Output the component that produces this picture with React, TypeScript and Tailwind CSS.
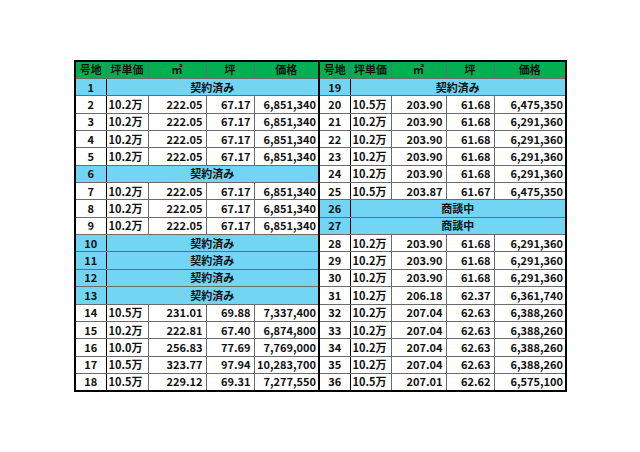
type Row = { no: number; status?: string; price?: string; area?: string; tsubo?: string; total?: string };

const s = (no: number, status: string): Row => ({ no, status });
const d = (no: number, price: string, area: string, tsubo: string, total: string): Row => ({ no, price, area, tsubo, total });

const left: Row[] = [
  s(1, "契約済み"),
  d(2, "10.2万", "222.05", "67.17", "6,851,340"),
  d(3, "10.2万", "222.05", "67.17", "6,851,340"),
  d(4, "10.2万", "222.05", "67.17", "6,851,340"),
  d(5, "10.2万", "222.05", "67.17", "6,851,340"),
  s(6, "契約済み"),
  d(7, "10.2万", "222.05", "67.17", "6,851,340"),
  d(8, "10.2万", "222.05", "67.17", "6,851,340"),
  d(9, "10.2万", "222.05", "67.17", "6,851,340"),
  s(10, "契約済み"),
  s(11, "契約済み"),
  s(12, "契約済み"),
  s(13, "契約済み"),
  d(14, "10.5万", "231.01", "69.88", "7,337,400"),
  d(15, "10.2万", "222.81", "67.40", "6,874,800"),
  d(16, "10.0万", "256.83", "77.69", "7,769,000"),
  d(17, "10.5万", "323.77", "97.94", "10,283,700"),
  d(18, "10.5万", "229.12", "69.31", "7,277,550"),
];

const right: Row[] = [
  s(19, "契約済み"),
  d(20, "10.5万", "203.90", "61.68", "6,475,350"),
  d(21, "10.2万", "203.90", "61.68", "6,291,360"),
  d(22, "10.2万", "203.90", "61.68", "6,291,360"),
  d(23, "10.2万", "203.90", "61.68", "6,291,360"),
  d(24, "10.2万", "203.90", "61.68", "6,291,360"),
  d(25, "10.5万", "203.87", "61.67", "6,475,350"),
  s(26, "商談中"),
  s(27, "商談中"),
  d(28, "10.2万", "203.90", "61.68", "6,291,360"),
  d(29, "10.2万", "203.90", "61.68", "6,291,360"),
  d(30, "10.2万", "203.90", "61.68", "6,291,360"),
  d(31, "10.2万", "206.18", "62.37", "6,361,740"),
  d(32, "10.2万", "207.04", "62.63", "6,388,260"),
  d(33, "10.2万", "207.04", "62.63", "6,388,260"),
  d(34, "10.2万", "207.04", "62.63", "6,388,260"),
  d(35, "10.2万", "207.04", "62.63", "6,388,260"),
  d(36, "10.5万", "207.01", "62.62", "6,575,100"),
];

const cell = "h-[17.37px] border border-[#6b6b6b] p-0 leading-none";

function Half({ row, last }: { row: Row; last?: boolean }) {
  const edge = last ? "" : "border-r-2 border-r-black";
  if (row.status) {
    return (
      <>
        <td className={`${cell} bg-[#72d5f4] text-center border-r-black`}>{row.no}</td>
        <td colSpan={4} className={`${cell} bg-[#72d5f4] text-center ${edge}`}>
          {row.status}
        </td>
      </>
    );
  }
  return (
    <>
      <td className={`${cell} text-center border-r-black`}>{row.no}</td>
      <td className={`${cell} text-left pl-[2px]`}>{row.price}</td>
      <td className={`${cell} text-right pr-[3px]`}>{row.area}</td>
      <td className={`${cell} text-right pr-[3px]`}>{row.tsubo}</td>
      <td className={`${cell} text-right pr-[2px] ${edge}`}>{row.total}</td>
    </>
  );
}

const heads = ["号地", "坪単価", "㎡", "坪", "価格"];

export default function App() {
  return (
    <div className="w-[640px] h-[452px] bg-white pt-[60px] pl-[74px]">
      <table
        className="table-fixed border-collapse border-2 border-black text-[11px] font-bold text-[#111]"
        style={{ fontFamily: '"Noto Sans CJK JP", "Noto Sans", sans-serif', width: 491 }}
      >
        <colgroup>
          <col className="w-[31px]" />
          <col className="w-[42px]" />
          <col className="w-[58px]" />
          <col className="w-[48px]" />
          <col className="w-[65px]" />
          <col className="w-[31px]" />
          <col className="w-[41px]" />
          <col className="w-[55px]" />
          <col className="w-[48px]" />
          <col className="w-[72px]" />
        </colgroup>
        <thead>
          <tr>
            {[...heads, ...heads].map((h, i) => (
              <th
                key={i}
                className={`${cell} bg-[#00b050] text-center font-bold ${i === 4 ? "border-r-2 border-r-black" : ""}`}
              >
                {h}
              </th>
            ))}
          </tr>
        </thead>
        <tbody>
          {left.map((r, i) => (
            <tr key={r.no}>
              <Half row={r} />
              <Half row={right[i]} last />
            </tr>
          ))}
        </tbody>
      </table>
    </div>
  );
}
